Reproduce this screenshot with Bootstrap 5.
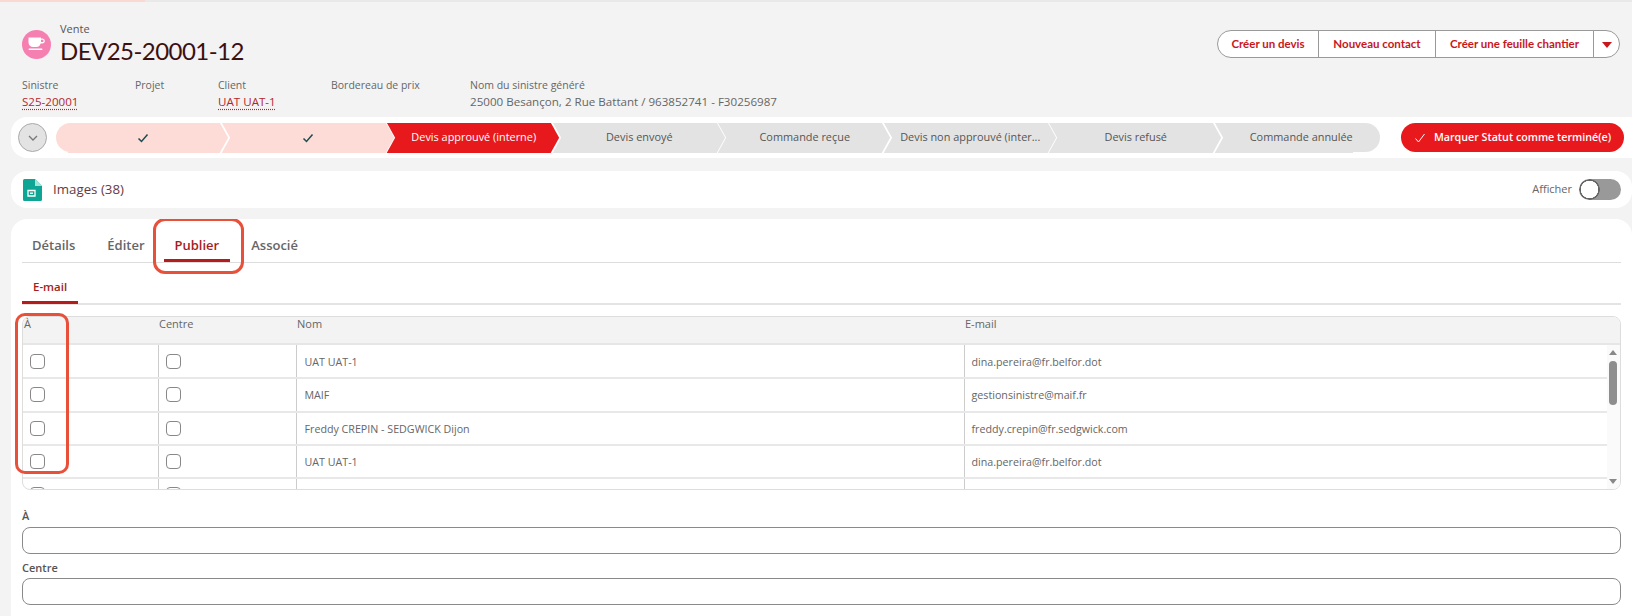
<!DOCTYPE html>
<html lang="fr">
<head>
    <meta charset="UTF-8">
    <title>DEV25-20001-12</title>
    <meta name="viewport" content="width=device-width, initial-scale=1">
    <link href="https://cdn.jsdelivr.net/npm/bootstrap@5.3.3/dist/css/bootstrap.min.css" rel="stylesheet">
    <style>
        html, body { height: 616px; overflow: hidden; }
        body { background: #f3f3f3; font-family: "Open Sans", "Liberation Sans", sans-serif; font-size: 12px; color: #555; }

        /* top strip */
        .load-strip { height: 2px; background: #e9e9e9; }
        .load-strip div { width: 145px; height: 2px; background: #fbd9d3; }

        /* header */
        .head-top { padding: 20px 12px 0 22px; }
        .rec-icon { width: 29px; height: 29px; border-radius: 50%; background: #f57fb0; margin-right: 9px; }
        .rec-type { font-size: 11px; line-height: 14px; color: #555; }
        .rec-title { font-family: "Lato", sans-serif; font-size: 24px; line-height: 30px; letter-spacing: -.55px; color: #3b1010; font-weight: 400; margin: 0; }
        .head-btns .btn { font-family: "Lato", sans-serif; font-size: 11.500px; font-weight: 700; color: #c8161d; background: #fff; border: 1px solid #999; height: 28px; padding: 0; line-height: 26px; border-radius: 0; flex: none; }
        .head-btns .btn:nth-child(1) { width: 102px; border-radius: 14px 0 0 14px; }
        .head-btns .btn:nth-child(2) { width: 118px; }
        .head-btns .btn:nth-child(3) { width: 159px; }
        .head-btns .btn:nth-child(4) { width: 27px; border-radius: 0 14px 14px 0; }
        .drop-arrow { display: inline-block; border: 5px solid transparent; border-top: 6px solid #c8161d; border-bottom: 0; vertical-align: middle; }

        .field-row { padding: 12px 0 0 22px; height: 51px; }
        .field-row .fld1 { width: 113px; }
        .field-row .fld2 { width: 83px; }
        .field-row .fld3 { width: 113px; }
        .field-row .fld4 { width: 139px; }
        .fld-label { font-size: 10.500px; line-height: 15px; color: #666; }
        .fld-value { font-size: 11.600px; line-height: 18px; color: #666; }
        .fld-value a { color: #b3262b; text-decoration: underline dotted #b3262b; text-underline-offset: 3px; }

        /* path */
        .path-panel { margin-left: 11px; height: 41px; padding: 6px 8px 6px 7px; background: #fff; border-radius: 16px 0 0 16px; }
        .path-toggle { width: 29px; height: 29px; padding: 0; border-radius: 50%; background: #e3e3e3; border: 1px solid #aaa; margin-right: 9px; flex: none; }
        .path-steps { width: 1324px; flex: none; margin-right: 21px; }
        .path-step { flex: 1 1 0; height: 29px; position: relative; display: flex; align-items: center; justify-content: center; padding-left: 8px; min-width: 0; }
        .path-step span { position: relative; z-index: 1; font-size: 10.900px; white-space: nowrap; }
        .path-step svg { position: relative; z-index: 1; }
        .path-step::before, .path-step::after { content: ""; position: absolute; left: 8px; right: -6px; height: 50%; background: var(--step); }
        .path-step::before { top: 0; transform-origin: 0 100%; transform: skewX(29deg); }
        .path-step::after { bottom: 0; transform-origin: 0 0; transform: skewX(-29deg); }
        .path-step:first-child { border-radius: 15px 0 0 15px; background: linear-gradient(var(--step), var(--step)) left / 40px 100% no-repeat; }
        .path-step:first-child::before, .path-step:first-child::after { left: 20px; }
        .path-step:last-child { border-radius: 0 15px 15px 0; background: linear-gradient(var(--step), var(--step)) right / 40px 100% no-repeat; }
        .path-step:last-child::before, .path-step:last-child::after { right: 20px; }
        .step-done { --step: #fddcd7; }
        .step-current { --step: #e8191c; color: #fff; }
        .step-todo { --step: #e3e3e3; color: #555; }
        .mark-btn { width: 223px; height: 29px; padding: 0; border: 0; border-radius: 15px; background: #e8191c; color: #fff; font-size: 10.700px; font-weight: 600; }
        .mark-btn:hover { background: #e8191c; color: #fff; }

        /* images strip */
        .img-panel { margin: 13px 0 0 11px; height: 37px; padding: 0 11px 0 12px; background: #fff; border-radius: 16px; }
        .img-title { font-size: 13.300px; color: #6b3a3a; margin-left: 11px; }
        .show-label { font-size: 11px; color: #666; margin-right: 7px; }
        .form-switch.show-switch { padding: 0; margin: 0; min-height: 0; }
        .form-switch.show-switch .form-check-input { float: none; margin: 0; display: block; width: 42px; height: 21px; border: 0; border-radius: 11px; background-color: #999; background-position: 0 0; background-size: auto; background-image: radial-gradient(circle at 10.500px 10.500px, #fff 8.500px, #666 9px, #666 10px, #999 10.500px); }

        /* main card */
        .main-panel { margin: 11px 0 0 11px; height: 397px; padding: 0 11px; background: #fff; border-radius: 16px 16px 0 0; overflow: hidden; }
        .main-tabs { border-bottom: 1px solid #ddd; height: 44px; }
        .main-tabs .nav-item:first-child { margin-left: -1px; }
        .main-tabs .nav-link { position: relative; height: 43px; padding: 16px 11px 0; margin-right: 10px; font-size: 13px; font-weight: 600; line-height: 20px; color: #666; }
        .main-tabs .nav-item:nth-child(2) .nav-link { margin-right: 8px; }
        .main-tabs .nav-link.active { color: #a61c1c; }
        .main-tabs .nav-link.active::after, .sub-tabs .nav-link.active::after { content: ""; position: absolute; left: 0; right: 0; bottom: 0; height: 3px; background: #b51c1c; }
        .sub-tabs { border-bottom: 2px solid #e4e4e4; height: 42px; }
        .sub-tabs .nav-link { position: relative; height: 41px; padding: 14px 11px 0; font-size: 11.500px; font-weight: 600; line-height: 20px; color: #a61c1c; }
        .callout { position: absolute; border: 3px solid #e8503a; border-radius: 12px; pointer-events: none; }
        .callout-tab { left: -11px; right: -14px; top: -1px; bottom: -12px; }
        .callout-col { left: -7px; top: -3px; width: 54px; height: 161px; border-radius: 10px; }

        .mail-wrap { position: relative; margin-top: 11px; }
        .mail-box { height: 174px; border: 1px solid #ddd; border-radius: 8px; overflow: hidden; }
        .mail-head { height: 28px; background: #f3f3f3; border-bottom: 2px solid #e6e6e6; font-size: 11px; font-weight: 500; color: #666; }
        .mail-head > div { padding: 0 0 0 1px; line-height: 14px; }
        .w-to { width: 135px; }
        .w-cc { width: 138px; }
        .w-name-head { width: 668px; }
        .mail-body { height: 144px; overflow: hidden; }
        .mail-table { table-layout: fixed; width: 1584px; margin: 0; font-size: 10.700px; color: #666; }
        .mail-table td { height: 33.300px; padding: 1px 7px 0; vertical-align: middle; border-bottom: 2px solid #e8e8e8; border-right: 1px solid #ccc; }
        .mail-table td:nth-child(3) { padding-left: 8px; }
        .mail-table td:last-child { border-right: 0; }
        .mail-table .form-check-input { display: block; width: 15px; height: 15px; margin: -1px 0 0; border: 1.500px solid #888; border-radius: 4px; }
        .scroll-rail { width: 13px; flex: none; background: #fafafa; position: relative; }
        .rail-up, .rail-down { position: absolute; left: 2px; border: 4px solid transparent; border-top-width: 0; border-bottom: 5px solid #888; }
        .rail-up { top: 5px; }
        .rail-down { bottom: 5px; transform: rotate(180deg); }
        .rail-thumb { position: absolute; left: 2px; top: 16px; width: 8px; height: 44px; border-radius: 4px; background: #8e8e8e; }

        .mail-form label { display: block; font-size: 11px; font-weight: 600; line-height: 16px; color: #555; }
        .mail-form .form-control { height: 27px; padding: 0 8px; border: 1px solid #8a8a8a; border-radius: 8px; min-height: 0; }
    </style>
</head>
<body>

<div class="load-strip"><div></div></div>

<div class="head-top d-flex justify-content-between align-items-center">
    <div class="d-flex align-items-center">
        <div class="rec-icon d-flex align-items-center justify-content-center">
            <svg width="20" height="20" viewBox="0 0 20 20" fill="#fff"><path d="M1.500 3.500h12.500v1h1.200c1.600 0 2.600 1 2.600 2.400s-1 2.500-2.600 2.500h-1.600C13 11.600 11.500 13 9.500 13h-3.500C3.500 13 1.500 11 1.500 8.500zM14 5.800v2.300h1.200c.8 0 1.300-.5 1.300-1.200s-.5-1.100-1.300-1.100z"/><rect x="1.500" y="14.500" width="14" height="1.500" rx=".7"/></svg>
        </div>
        <div>
            <div class="rec-type">Vente</div>
            <h1 class="rec-title">DEV25-20001-12</h1>
        </div>
    </div>
    <div class="btn-group head-btns" role="group">
        <button type="button" class="btn">Créer un devis</button>
        <button type="button" class="btn">Nouveau contact</button>
        <button type="button" class="btn">Créer une feuille chantier</button>
        <button type="button" class="btn"><span class="drop-arrow"></span></button>
    </div>
</div>

<div class="field-row d-flex">
    <div class="fld1"><div class="fld-label">Sinistre</div><div class="fld-value"><a href="#">S25-20001</a></div></div>
    <div class="fld2"><div class="fld-label">Projet</div></div>
    <div class="fld3"><div class="fld-label">Client</div><div class="fld-value"><a href="#">UAT UAT-1</a></div></div>
    <div class="fld4"><div class="fld-label">Bordereau de prix</div></div>
    <div><div class="fld-label">Nom du sinistre généré</div><div class="fld-value">25000 Besançon, 2 Rue Battant / 963852741 - F30256987</div></div>
</div>

<div class="path-panel d-flex align-items-center">
    <button type="button" class="path-toggle d-flex align-items-center justify-content-center">
        <svg width="12" height="12" viewBox="0 0 12 12" fill="none" stroke="#777" stroke-width="1.300"><path d="M2 4l4 4 4-4"/></svg>
    </button>
    <div class="path-steps d-flex">
        <div class="path-step step-done"><svg width="12" height="12" viewBox="0 0 12 12" fill="none" stroke="#1f4a50" stroke-width="1.500"><path d="M1.500 6.500l3 3 6-7"/></svg></div>
        <div class="path-step step-done"><svg width="12" height="12" viewBox="0 0 12 12" fill="none" stroke="#1f4a50" stroke-width="1.500"><path d="M1.500 6.500l3 3 6-7"/></svg></div>
        <div class="path-step step-current"><span>Devis approuvé (interne)</span></div>
        <div class="path-step step-todo"><span>Devis envoyé</span></div>
        <div class="path-step step-todo"><span>Commande reçue</span></div>
        <div class="path-step step-todo"><span>Devis non approuvé (inter...</span></div>
        <div class="path-step step-todo"><span>Devis refusé</span></div>
        <div class="path-step step-todo"><span>Commande annulée</span></div>
    </div>
    <button type="button" class="btn mark-btn d-flex align-items-center justify-content-center gap-2">
        <svg width="12" height="12" viewBox="0 0 12 12" fill="none" stroke="#fff" stroke-width="1"><path d="M1.500 6.500l3 3.500 6-8"/></svg>
        Marquer Statut comme terminé(e)
    </button>
</div>

<div class="img-panel d-flex align-items-center justify-content-between">
    <div class="d-flex align-items-center">
        <svg width="19" height="22" viewBox="0 0 19 22"><path fill="#0fa595" d="M1.500 0H12l7 7v13.500a1.500 1.500 0 0 1-1.500 1.500h-16A1.500 1.500 0 0 1 0 20.500v-19A1.500 1.500 0 0 1 1.500 0z"/><path fill="#a5e3da" d="M12 0l7 7h-7z"/><path fill="none" stroke="#fff" stroke-width="1.300" d="M5 11.500h7v5.500H5z"/><path fill="#fff" d="M7 13.500h3v1.500H7z"/></svg>
        <span class="img-title">Images (38)</span>
    </div>
    <div class="d-flex align-items-center">
        <span class="show-label">Afficher</span>
        <div class="form-check form-switch show-switch"><input class="form-check-input" type="checkbox" role="switch" aria-label="Afficher"></div>
    </div>
</div>

<div class="main-panel">
    <ul class="nav main-tabs">
        <li class="nav-item"><a class="nav-link" href="#">Détails</a></li>
        <li class="nav-item"><a class="nav-link" href="#">Éditer</a></li>
        <li class="nav-item"><a class="nav-link active" href="#">Publier<span class="callout callout-tab"></span></a></li>
        <li class="nav-item"><a class="nav-link" href="#">Associé</a></li>
    </ul>
    <ul class="nav sub-tabs">
        <li class="nav-item"><a class="nav-link active" href="#">E-mail</a></li>
    </ul>

    <div class="mail-wrap">
        <div class="mail-box">
            <div class="mail-head d-flex">
                <div class="w-to">À</div>
                <div class="w-cc">Centre</div>
                <div class="w-name-head">Nom</div>
                <div>E-mail</div>
            </div>
            <div class="mail-body d-flex">
                <div class="flex-grow-1 overflow-hidden">
                    <table class="mail-table">
                        <colgroup><col class="w-to"><col class="w-cc"><col class="w-name-head"><col></colgroup>
                        <tbody>
                            <tr><td><input class="form-check-input" type="checkbox" aria-label="À"></td><td><input class="form-check-input" type="checkbox" aria-label="Centre"></td><td>UAT UAT-1</td><td>dina.pereira@fr.belfor.dot</td></tr>
                            <tr><td><input class="form-check-input" type="checkbox" aria-label="À"></td><td><input class="form-check-input" type="checkbox" aria-label="Centre"></td><td>MAIF</td><td>gestionsinistre@maif.fr</td></tr>
                            <tr><td><input class="form-check-input" type="checkbox" aria-label="À"></td><td><input class="form-check-input" type="checkbox" aria-label="Centre"></td><td>Freddy CREPIN - SEDGWICK Dijon</td><td>freddy.crepin@fr.sedgwick.com</td></tr>
                            <tr><td><input class="form-check-input" type="checkbox" aria-label="À"></td><td><input class="form-check-input" type="checkbox" aria-label="Centre"></td><td>UAT UAT-1</td><td>dina.pereira@fr.belfor.dot</td></tr>
                            <tr><td><input class="form-check-input" type="checkbox" aria-label="À"></td><td><input class="form-check-input" type="checkbox" aria-label="Centre"></td><td></td><td></td></tr>
                        </tbody>
                    </table>
                </div>
                <div class="scroll-rail"><div class="rail-up"></div><div class="rail-thumb"></div><div class="rail-down"></div></div>
            </div>
        </div>
        <span class="callout callout-col"></span>
    </div>

    <form class="mail-form">
        <label for="mail-to" style="margin-top:18px;margin-bottom:3px">À</label>
        <input type="text" class="form-control" id="mail-to">
        <label for="mail-cc" style="margin-top:6px;margin-bottom:2px">Centre</label>
        <input type="text" class="form-control" id="mail-cc">
    </form>
</div>

<script src="https://cdn.jsdelivr.net/npm/bootstrap@5.3.3/dist/js/bootstrap.bundle.min.js"></script>
</body>
</html>
